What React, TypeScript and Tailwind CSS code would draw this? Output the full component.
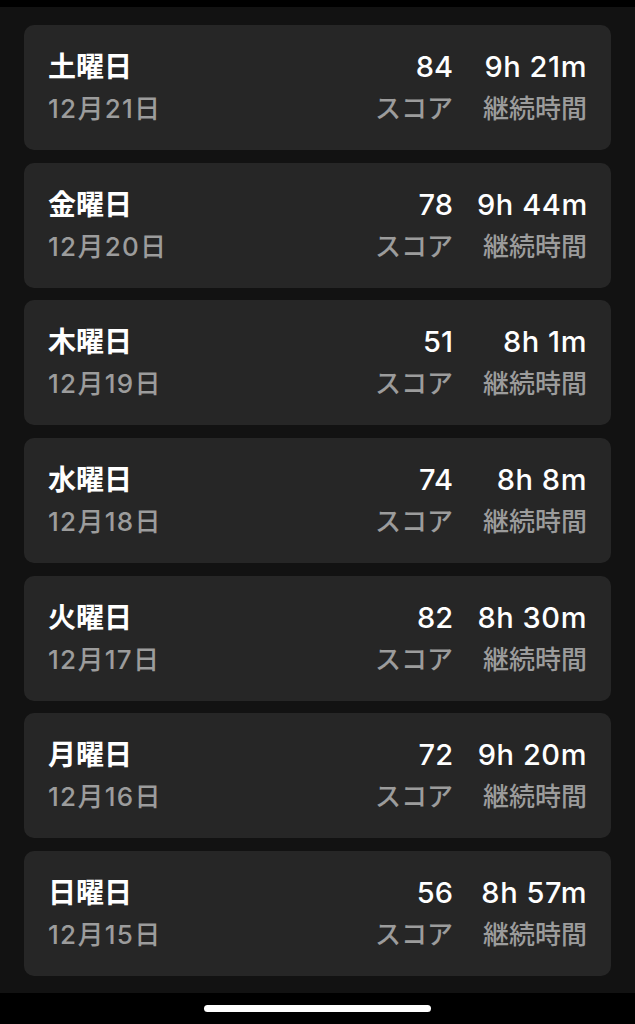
const days = [
  { day: "土曜日", date: "12月21日", score: 84, duration: "9h 21m" },
  { day: "金曜日", date: "12月20日", score: 78, duration: "9h 44m" },
  { day: "木曜日", date: "12月19日", score: 51, duration: "8h 1m" },
  { day: "水曜日", date: "12月18日", score: 74, duration: "8h 8m" },
  { day: "火曜日", date: "12月17日", score: 82, duration: "8h 30m" },
  { day: "月曜日", date: "12月16日", score: 72, duration: "9h 20m" },
  { day: "日曜日", date: "12月15日", score: 56, duration: "8h 57m" },
];

function DayCard({ day, date, score, duration }: (typeof days)[number]) {
  return (
    <div className="flex h-[125px] items-center justify-between rounded-[10px] bg-[#262626] px-6">
      <div className="flex flex-col pt-px">
        <span className="h-[42px] text-[28px] leading-[42px] font-bold text-white">{day}</span>
        <span className="h-[42px] text-[26px] leading-[42px] font-medium tracking-[0.05em] text-[#9c9c9c]">{date}</span>
      </div>
      <div className="flex gap-6 pt-px text-right">
        <div className="flex flex-col">
          <span className="h-[42px] text-[29px] leading-[42px] font-medium text-white">{score}</span>
          <span className="h-[42px] text-[26px] leading-[42px] font-medium text-[#9c9c9c]">スコア</span>
        </div>
        <div className="flex w-[110px] flex-col">
          <span className="h-[42px] text-[29px] leading-[42px] font-medium tracking-[0.02em] whitespace-nowrap text-white">
            {duration}
          </span>
          <span className="h-[42px] text-[26px] leading-[42px] font-medium text-[#9c9c9c]">継続時間</span>
        </div>
      </div>
    </div>
  );
}

export default function App() {
  return (
    <div
      className="flex h-[1024px] w-[635px] flex-col bg-black"
      style={{ fontFamily: '"Inter", "Noto Sans CJK JP", sans-serif' }}
    >
      <div className="h-[7px] bg-black" />
      {/* Sleep history list */}
      <div className="flex flex-col gap-[12.67px] bg-[#121212] px-6 pt-[18px] pb-[17px]">
        {days.map((d) => (
          <DayCard key={d.date} {...d} />
        ))}
      </div>
      <div className="flex h-[31px] items-start justify-center bg-black pt-3">
        <div className="h-[7px] w-[227px] rounded-full bg-white" />
      </div>
    </div>
  );
}
